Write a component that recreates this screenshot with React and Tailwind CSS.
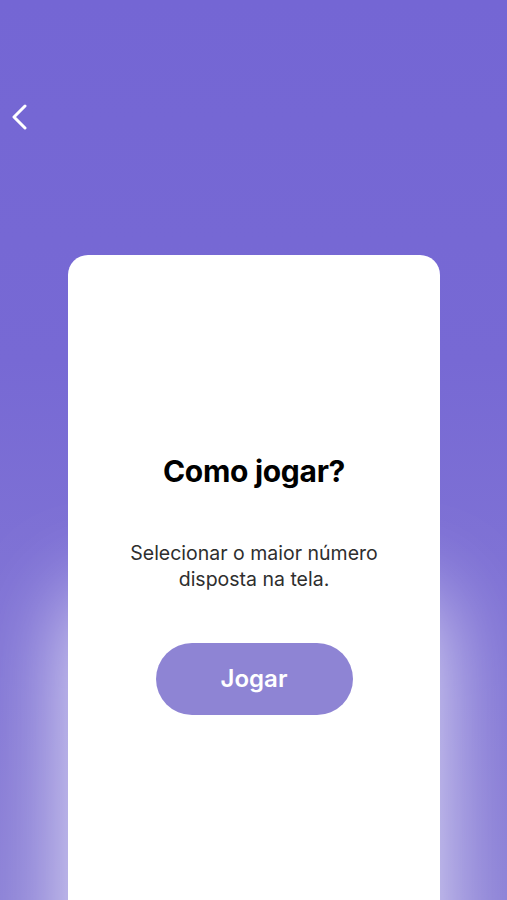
export default function App() {
  return (
    <div
      className="relative w-[507px] h-[900px] overflow-hidden bg-[#7467d4]"
      style={{ fontFamily: "Inter, 'Noto Sans', sans-serif" }}
    >
      <div className="absolute inset-0 bg-[linear-gradient(180deg,#7466d4_0%,#7769d4_40%,#8a7fd6_100%)]" />
      <div className="relative flex flex-col">
        <div className="h-[103px]" />
        <button className="ml-[11px] w-[20px] h-[28px] flex items-center text-white">
          <svg width="18" height="26" viewBox="0 0 18 26" fill="none">
            <path d="M14 2 L3 13 L14 24" stroke="white" strokeWidth="3" strokeLinecap="round" strokeLinejoin="round" />
          </svg>
        </button>
        <div className="h-[124px]" />
        <div className="ml-[68px] w-[372px] h-[700px] rounded-[20px] bg-white shadow-[0_340px_90px_rgba(255,255,255,0.8)] flex flex-col items-center">
          <div className="h-[198px]" />
          <h1 className="text-[30px] leading-[36px] font-bold text-black tracking-[-0.3px]">Como jogar?</h1>
          <p className="mt-[51px] text-[19.5px] leading-[26px] text-[#2e2e2e] text-center">
            Selecionar o maior número
            <br />
            disposta na tela.
          </p>
          <button className="mt-[51px] w-[197px] h-[72px] rounded-full bg-[#8e84d4] text-white text-[24px] font-semibold">
            Jogar
          </button>
        </div>
      </div>
    </div>
  );
}
